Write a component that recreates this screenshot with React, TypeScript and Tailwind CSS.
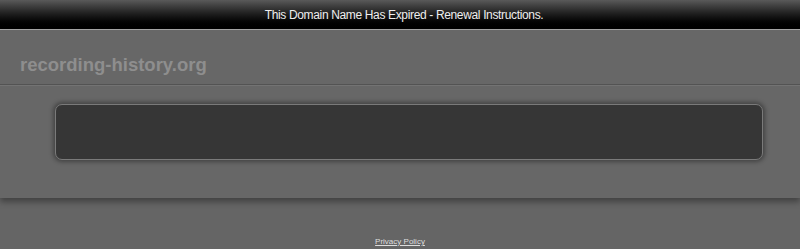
import React from "react";

export default function App() {
  return (
    <div className="min-h-[249px] w-full bg-[#656565] font-['Liberation_Sans',Arial,sans-serif]">
      <div className="flex h-[29px] items-center justify-center bg-gradient-to-b from-[#5a5a5a] via-[#1c1c1c] to-[#000000]">
        <span className="ml-[8px] text-[12px] leading-none text-[#eeeeee] tracking-[-0.35px]">
          This Domain Name Has Expired - Renewal Instructions.
        </span>
      </div>
      <div className="h-[1px] bg-[#a8a8a8]" />
      <div className="bg-[#676767] shadow-[0_4px_6px_rgba(0,0,0,0.35)]">
        <div className="flex h-[55px] items-end border-b border-[#535353] px-[20px] pb-[10px]">
          <span className="text-[18.5px] font-bold leading-none text-[#8e8e8e]">recording-history.org</span>
        </div>
        <div className="h-[1px] bg-[#737373]" />
        <div className="pb-[38px] pl-[55px] pr-[37px] pt-[18px]">
          <div className="h-[56px] rounded-[7px] border border-[#7a7a7a] bg-[#363636] shadow-[0_0_4px_2px_rgba(0,0,0,0.35)]" />
        </div>
      </div>
      <div className="flex justify-center pt-[40px]">
        <a href="#" className="text-[8px] leading-none text-[#dddddd] underline">
          Privacy Policy
        </a>
      </div>
    </div>
  );
}
